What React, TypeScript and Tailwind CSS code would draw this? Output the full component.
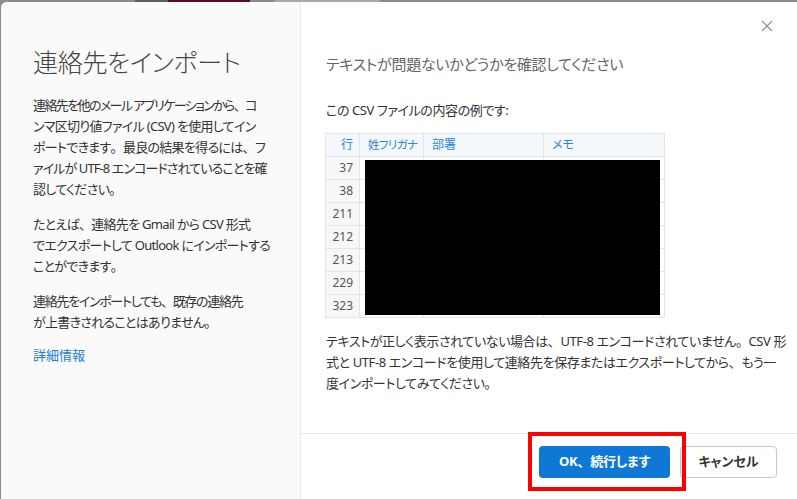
import React from "react";

const font = {
  fontFamily: '"Noto Sans", "Noto Sans CJK JP", sans-serif',
} as React.CSSProperties;

// keep ideographic punctuation full width while kana use proportional widths
function J({ t }: { t: string }) {
  const parts = t.split(/([、。])/);
  return (
    <>
      {parts.map((p, i) =>
        p === "、" || p === "。" ? (
          <span key={i} className="[font-feature-settings:normal]">
            {p}
          </span>
        ) : (
          <React.Fragment key={i}>{p}</React.Fragment>
        )
      )}
    </>
  );
}

const rows = ["37", "38", "211", "212", "213", "229", "323"];

export default function App() {
  return (
    <div
      className="relative w-[797px] h-[499px] overflow-hidden bg-[#8c8c8c] flex flex-col [font-feature-settings:'palt']"
      style={font}
    >
      {/* background strip behind the dialog */}
      <div className="h-[2px] flex shrink-0">
        <div className="w-[135px]" />
        <div className="w-[33px] bg-[#5e5e5e]" />
        <div className="w-[82px] bg-[#5c0c18]" />
        <div className="w-[25px]" />
        <div className="w-[105px] bg-[#a8a8a8]" />
      </div>
      <div className="flex-1 flex pl-[1px] min-h-0">
        <div className="flex-1 flex bg-white rounded-tl-[6px] overflow-hidden">
          {/* left panel */}
          <div className="w-[300px] shrink-0 bg-[#fafafa] border-r border-[#e9e9e9] pl-[32px] pt-[43px] text-[#333]">
            <h1 className="text-[25px] leading-[34px] text-[#444] font-light tracking-[-0.3px] whitespace-nowrap">
              連絡先をインポート
            </h1>
            <div className="mt-[16px] text-[13px] leading-[21px] whitespace-nowrap tracking-[-0.7px]">
              <p>
                <span className="tracking-[-1.6px]">
                  <J t="連絡先を他のメール アプリケーションから、コ" />
                </span>
                <br />
                <J t="ンマ区切り値ファイル (CSV) を使用してイン" />
                <br />
                <J t="ポートできます。最良の結果を得るには、フ" />
                <br />
                <span className="tracking-[-0.9px]">
                  <J t="ァイルが UTF-8 エンコードされていることを確" />
                </span>
                <br />
                <J t="認してください。" />
              </p>
              <p className="mt-[14px]">
                <J t="たとえば、連絡先を Gmail から CSV 形式" />
                <br />
                <J t="でエクスポートして Outlook にインポートする" />
                <br />
                <J t="ことができます。" />
              </p>
              <p className="mt-[14px]">
                <span className="tracking-[-1.3px]">
                  <J t="連絡先をインポートしても、既存の連絡先" />
                </span>
                <br />
                <J t="が上書きされることはありません。" />
              </p>
              <p className="mt-[12px] text-[#1a7fd4] tracking-[0px]">詳細情報</p>
            </div>
          </div>

          {/* right panel */}
          <div className="flex-1 flex flex-col min-w-0">
            <div className="flex-1 relative pl-[25px] pt-[49px]">
              <button className="absolute right-[24px] top-[18px] w-[12px] h-[12px] flex items-center justify-center">
                <svg width="12" height="12" viewBox="0 0 12 12">
                  <path d="M1 1L11 11M11 1L1 11" stroke="#8a8a8a" strokeWidth="1.1" />
                </svg>
              </button>
              <h2 className="text-[15px] leading-[26px] text-[#666] tracking-[-0.3px] whitespace-nowrap">
                テキストが問題ないかどうかを確認してください
              </h2>
              <p className="mt-[23px] text-[13px] leading-[20px] text-[#333] tracking-[-0.4px]">
                この CSV ファイルの内容の例です:
              </p>
              <div className="relative mt-[13px] ml-[-1px] w-[339px]">
                <table className="border-collapse text-[12px] w-[339px] table-fixed">
                  <colgroup>
                    <col className="w-[34px]" />
                    <col className="w-[64px]" />
                    <col className="w-[120px]" />
                    <col className="w-[121px]" />
                  </colgroup>
                  <thead>
                    <tr className="h-[23px] bg-[#f4f8fc] text-[#2b86d6]">
                      <th className="border border-[#e2e5e8] font-normal text-right pr-[6px]">行</th>
                      <th className="border border-[#e2e5e8] font-normal text-left pl-[8px] whitespace-nowrap text-[11.5px] tracking-[-0.6px]">姓フリガナ</th>
                      <th className="border border-[#e2e5e8] font-normal text-left pl-[8px]">部署</th>
                      <th className="border border-[#e2e5e8] font-normal text-left pl-[8px]">メモ</th>
                    </tr>
                  </thead>
                  <tbody>
                    {rows.map((r) => (
                      <tr key={r} className="h-[23px]">
                        <td className="border border-[#e4e4e4] bg-[#f7f7f7] text-right pr-[6px] text-[#555]">{r}</td>
                        <td className="border border-[#e4e4e4]" />
                        <td className="border border-[#e4e4e4]" />
                        <td className="border border-[#e4e4e4]" />
                      </tr>
                    ))}
                  </tbody>
                </table>
                <div className="absolute left-[40px] top-[27px] w-[295px] h-[155px] bg-black" />
              </div>
              <p className="mt-[13px] text-[13px] leading-[21px] text-[#333] tracking-[-0.4px] whitespace-nowrap">
                <J t="テキストが正しく表示されていない場合は、UTF-8 エンコードされていません。CSV 形" />
                <br />
                <J t="式と UTF-8 エンコードを使用して連絡先を保存またはエクスポートしてから、もう一" />
                <br />
                <J t="度インポートしてみてください。" />
              </p>
            </div>
            <div className="h-[66px] shrink-0 border-t border-[#e6e6e6] flex items-start justify-end gap-[10px] pr-[20px] pt-[12px]">
              <button className="w-[131px] h-[32px] rounded-[4px] bg-[#0f78d4] text-white text-[13px] font-bold tracking-[-0.2px]">
                <J t="OK、続行します" />
              </button>
              <button className="w-[97px] h-[32px] rounded-[4px] bg-white border border-[#c8c8c8] text-[#333] text-[13px] font-bold">
                キャンセル
              </button>
            </div>
          </div>
        </div>
      </div>
      {/* red annotation box */}
      <div className="absolute left-[528px] top-[432px] w-[158px] h-[59px] border-[4px] border-[#ff0000]" />
    </div>
  );
}
